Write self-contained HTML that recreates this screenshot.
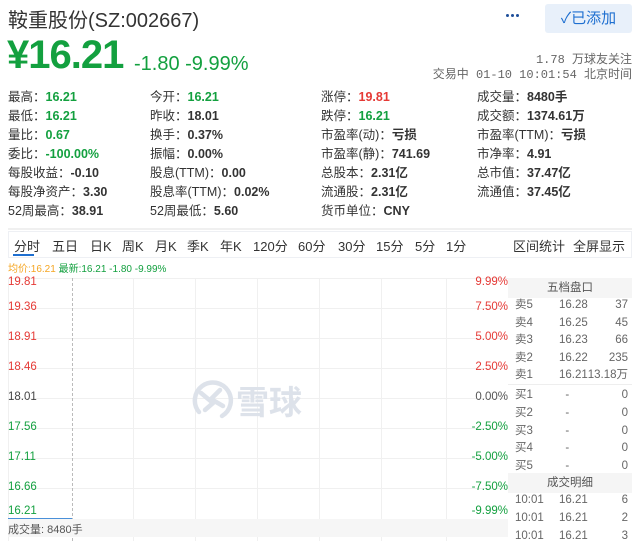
<!DOCTYPE html>
<html><head><meta charset="utf-8"><style>
*{margin:0;padding:0;box-sizing:border-box}
body{width:636px;height:541px;background:#fff;font-family:"Liberation Sans","Noto Sans CJK SC",sans-serif;color:#333;position:relative;overflow:hidden}
.a{position:absolute;white-space:nowrap}
.g{color:#13a03f}.r{color:#e53935}.b{color:#1e6fd0}
.st{font-size:12.5px;color:#333}
.st b{font-weight:bold}
.hl{position:absolute;left:8px;width:500px;height:1px;background:#f0f0f0}
.vl{position:absolute;top:278px;height:263px;width:1px;background:#f0f0f0}
.ax{font-size:11.5px}
.p{font-size:11.5px;color:#666}
.t{position:absolute;top:236px;font-size:13px;color:#333}
</style></head><body>
<div class="a" style="left:8px;top:4px;font-size:20px;color:#333">鞍重股份(SZ:002667)</div>
<div class="a" style="left:506px;top:12px;width:16px;height:6px"><i style="position:absolute;left:0;top:2px;width:3px;height:3px;border-radius:50%;background:#1e4f9a"></i><i style="position:absolute;left:5px;top:2px;width:3px;height:3px;border-radius:50%;background:#1e4f9a"></i><i style="position:absolute;left:10px;top:2px;width:3px;height:3px;border-radius:50%;background:#1e4f9a"></i></div>
<div class="a" style="left:545px;top:4px;width:87px;height:29px;background:#e8f0fa;border-radius:3px;color:#1e6fd0;font-size:15px;line-height:29px;text-align:center">✓已添加</div>
<div class="a g" style="left:7px;top:33px;font-size:40px;font-weight:bold;letter-spacing:-1px">¥16.21</div>
<div class="a g" style="left:134px;top:53px;font-size:20px">-1.80 -9.99%</div>
<div class="a" style="right:4px;top:50px;font-size:12px;color:#666;font-family:'Liberation Mono','Noto Sans CJK SC',monospace">1.78 万球友关注</div>
<div class="a" style="right:4px;top:65px;font-size:12px;color:#666;font-family:'Liberation Mono','Noto Sans CJK SC',monospace">交易中 01-10 10:01:54 北京时间</div>

<div class="a st" style="left:8px;top:88px;line-height:19px">最高：<b class="g">16.21</b><br>最低：<b class="g">16.21</b><br>量比：<b class="g">0.67</b><br>委比：<b class="g">-100.00%</b><br>每股收益：<b>-0.10</b><br>每股净资产：<b>3.30</b><br>52周最高：<b>38.91</b></div>
<div class="a st" style="left:150px;top:88px;line-height:19px">今开：<b class="g">16.21</b><br>昨收：<b>18.01</b><br>换手：<b>0.37%</b><br>振幅：<b>0.00%</b><br>股息(TTM)：<b>0.00</b><br>股息率(TTM)：<b>0.02%</b><br>52周最低：<b>5.60</b></div>
<div class="a st" style="left:321px;top:88px;line-height:19px">涨停：<b class="r">19.81</b><br>跌停：<b class="g">16.21</b><br>市盈率(动)：<b>亏损</b><br>市盈率(静)：<b>741.69</b><br>总股本：<b>2.31亿</b><br>流通股：<b>2.31亿</b><br>货币单位：<b>CNY</b></div>
<div class="a st" style="left:477px;top:88px;line-height:19px">成交量：<b>8480手</b><br>成交额：<b>1374.61万</b><br>市盈率(TTM)：<b>亏损</b><br>市净率：<b>4.91</b><br>总市值：<b>37.47亿</b><br>流通值：<b>37.45亿</b></div>
<div class="a" style="left:8px;top:228px;width:624px;height:2px;background:#f0f0f0"></div>

<div class="a" style="left:8px;top:231px;width:624px;height:27px;border:1px solid #eef0f4"></div>
<span class="t b" style="left:14px">分时</span><span class="t" style="left:52px">五日</span><span class="t" style="left:90px">日K</span><span class="t" style="left:122px">周K</span><span class="t" style="left:155px">月K</span><span class="t" style="left:187px">季K</span><span class="t" style="left:220px">年K</span><span class="t" style="left:253px">120分</span><span class="t" style="left:298px">60分</span><span class="t" style="left:338px">30分</span><span class="t" style="left:376px">15分</span><span class="t" style="left:415px">5分</span><span class="t" style="left:446px">1分</span>
<div class="a" style="left:13px;top:254px;width:21px;height:2px;background:#1e6fd0"></div>
<span class="t b" style="left:513px">区间统计</span><span class="t b" style="left:573px">全屏显示</span>
<div class="a" style="left:8px;top:260px;font-size:10px"><span style="color:#f5a623">均价:16.21</span> <span class="g">最新:16.21 -1.80 -9.99%</span></div>

<div class="hl" style="top:278px"></div><div class="hl" style="top:308px"></div><div class="hl" style="top:338px"></div><div class="hl" style="top:368px"></div><div class="hl" style="top:398px"></div><div class="hl" style="top:428px"></div><div class="hl" style="top:458px"></div><div class="hl" style="top:488px"></div>
<div class="vl" style="left:8px"></div><div class="vl" style="left:133px"></div><div class="vl" style="left:195px"></div><div class="vl" style="left:257px"></div><div class="vl" style="left:319px"></div><div class="vl" style="left:381px"></div><div class="vl" style="left:446px"></div>
<div class="a" style="left:72px;top:278px;height:263px;border-left:1px dashed #bbb"></div>
<div class="a" style="left:8px;top:518px;width:64px;height:1px;background:#4a90d9"></div>
<div class="a" style="left:8px;top:519px;width:500px;height:18px;background:#f6f6f6"></div>
<div class="a" style="left:8px;top:521px;font-size:11px;color:#555">成交量: 8480手</div>

<div class="a ax r" style="left:8px;top:276px">19.81</div>
<div class="a ax r" style="left:8px;top:301px">19.36</div>
<div class="a ax r" style="left:8px;top:331px">18.91</div>
<div class="a ax r" style="left:8px;top:361px">18.46</div>
<div class="a ax" style="left:8px;top:391px;color:#444">18.01</div>
<div class="a ax g" style="left:8px;top:421px">17.56</div>
<div class="a ax g" style="left:8px;top:451px">17.11</div>
<div class="a ax g" style="left:8px;top:481px">16.66</div>
<div class="a ax g" style="left:8px;top:505px">16.21</div>
<div class="a ax r" style="right:128px;top:276px">9.99%</div>
<div class="a ax r" style="right:128px;top:301px">7.50%</div>
<div class="a ax r" style="right:128px;top:331px">5.00%</div>
<div class="a ax r" style="right:128px;top:361px">2.50%</div>
<div class="a ax" style="right:128px;top:391px;color:#555">0.00%</div>
<div class="a ax g" style="right:128px;top:421px">-2.50%</div>
<div class="a ax g" style="right:128px;top:451px">-5.00%</div>
<div class="a ax g" style="right:128px;top:481px">-7.50%</div>
<div class="a ax g" style="right:128px;top:505px">-9.99%</div>

<svg class="a" style="left:190px;top:378px" width="124" height="44" viewBox="0 0 124 44">
<g fill="none" stroke="#dde2ea" stroke-width="4.5" stroke-linecap="round"><path d="M9 34 A18 18 0 1 1 32 38"/><path d="M11 15 L23 25 L15 32"/><path d="M30 12 L21 21 L33 28"/></g>
<text x="46" y="36" font-size="33" fill="#dde2ea" font-family="Noto Sans CJK SC,sans-serif" font-weight="bold">雪球</text></svg>

<div class="a" style="left:508px;top:278px;width:124px;height:20px;background:#f5f5f5;font-size:11.5px;color:#555;text-align:center;line-height:20px">五档盘口</div>
<div class="a" style="left:508px;top:384px;width:124px;height:1px;background:#eee"></div>
<div class="a" style="left:508px;top:473px;width:124px;height:20px;background:#f5f5f5;font-size:11.5px;color:#555;text-align:center;line-height:20px">成交明细</div>

<div class="a p" style="left:515px;top:297px;line-height:17.6px">卖5<br>卖4<br>卖3<br>卖2<br>卖1<br><span style="line-height:20px">买1</span><br>买2<br>买3<br>买4<br>买5</div>
<div class="a p g" style="left:559px;top:297px;line-height:17.6px">16.28<br>16.25<br>16.23<br>16.22<br>16.21<br><span style="line-height:20px">&nbsp;&nbsp;-</span><br>&nbsp;&nbsp;-<br>&nbsp;&nbsp;-<br>&nbsp;&nbsp;-<br>&nbsp;&nbsp;-</div>
<div class="a p" style="right:8px;top:297px;line-height:17.6px;text-align:right">37<br>45<br>66<br>235<br>13.18万<br><span style="line-height:20px">0</span><br>0<br>0<br>0<br>0</div>
<div class="a p" style="left:515px;top:491px;line-height:18px">10:01<br>10:01<br>10:01</div>
<div class="a p g" style="left:559px;top:491px;line-height:18px">16.21<br>16.21<br>16.21</div>
<div class="a p r" style="right:8px;top:491px;line-height:18px;text-align:right">6<br>2<br>3</div>
</body></html>
